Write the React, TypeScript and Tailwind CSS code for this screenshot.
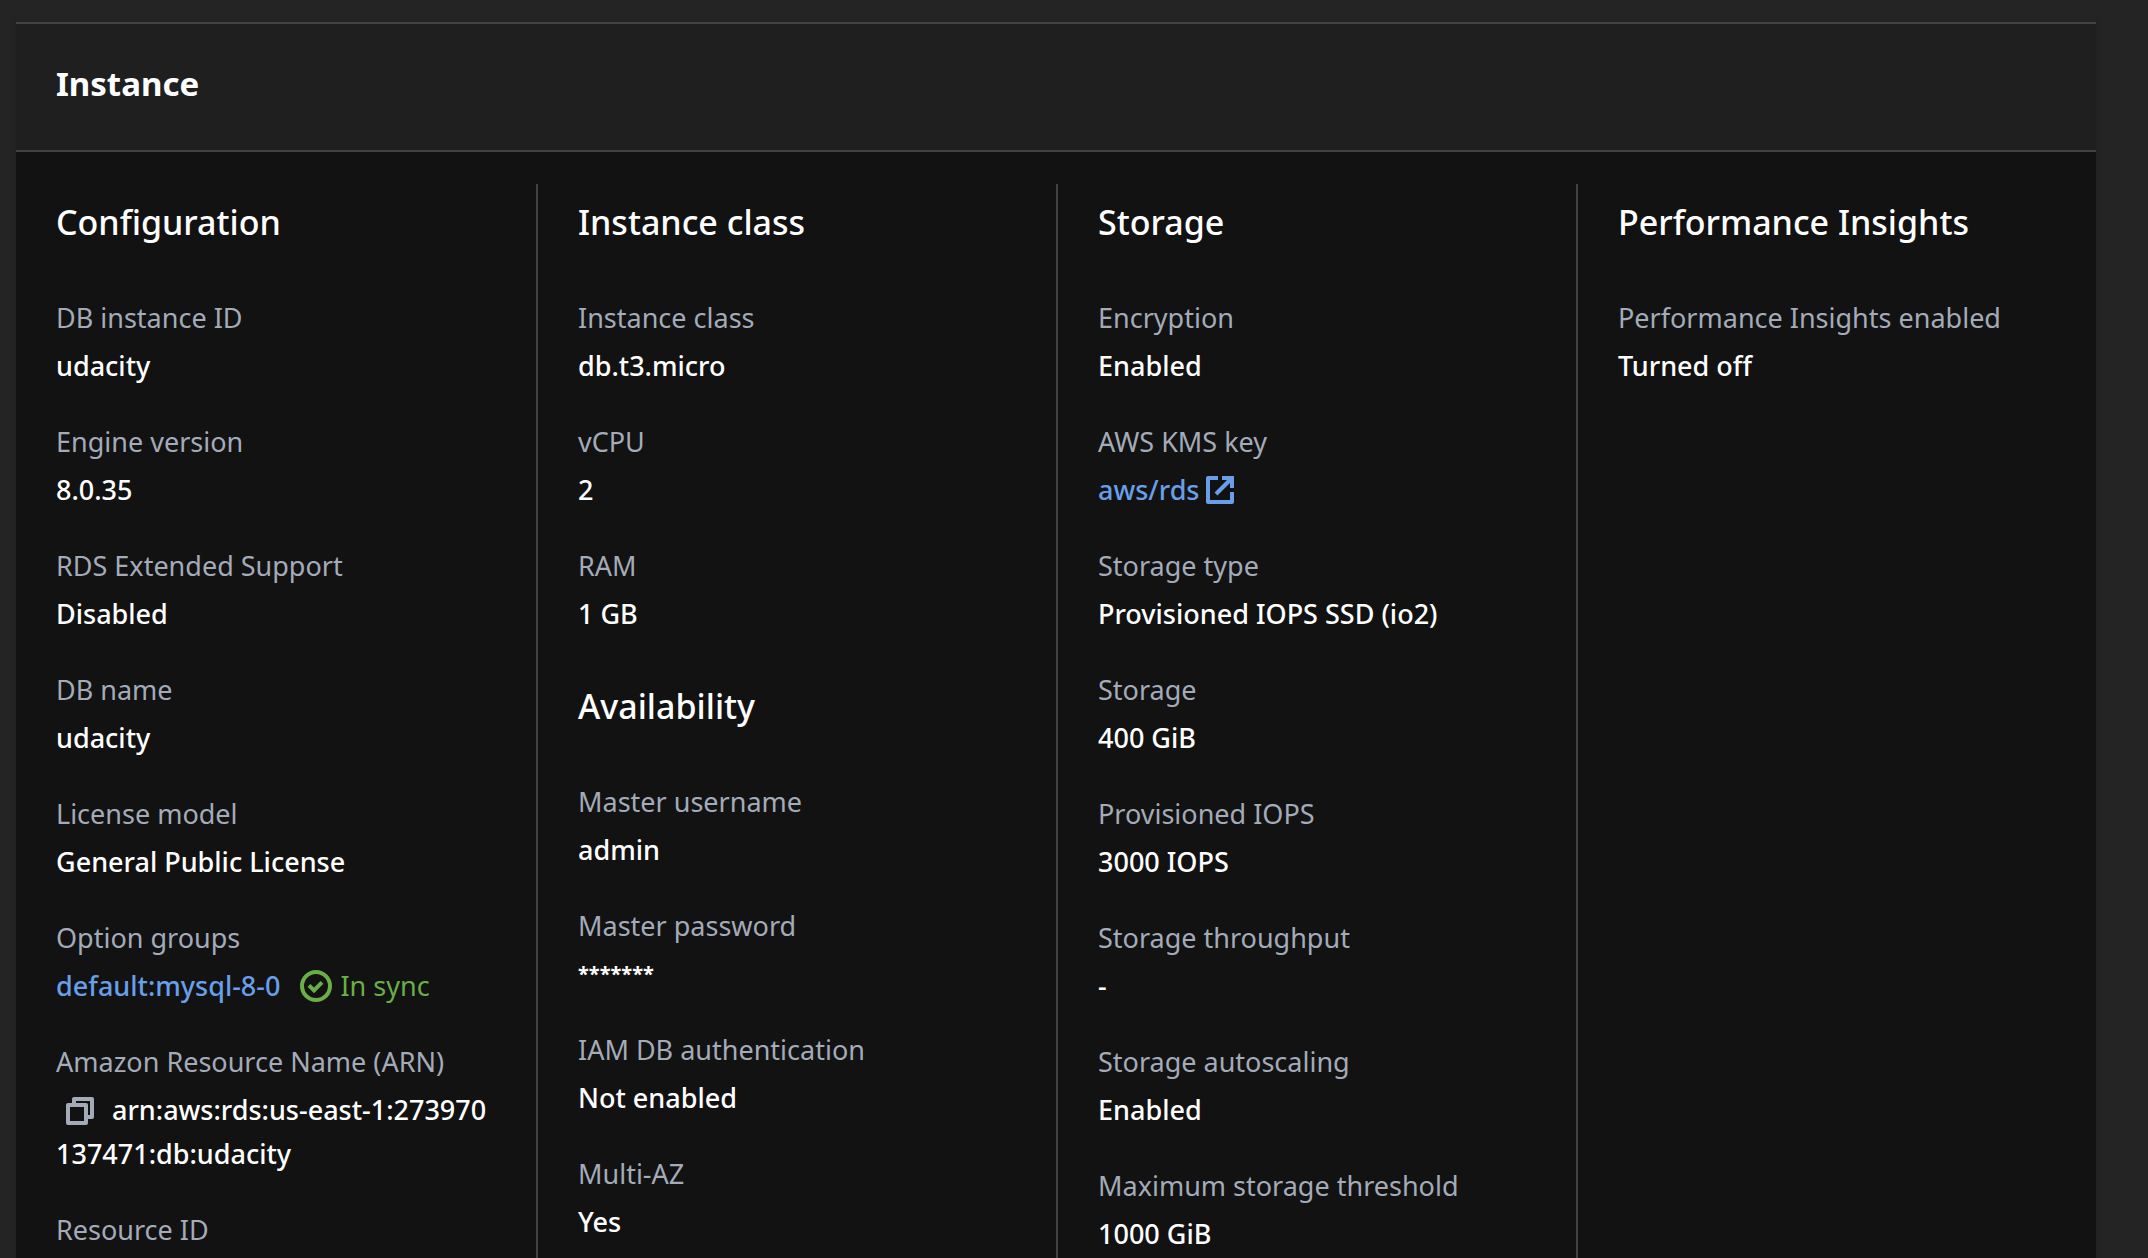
import type { ReactNode } from "react";

type Item = { label: string; value: ReactNode };
type Group = { title: string; items: Item[] };

const stroke = {
  fill: "none",
  stroke: "currentColor",
  strokeWidth: 2,
  strokeLinejoin: "round" as const,
};

function ExternalIcon() {
  return (
    <svg viewBox="0 0 16 16" className="size-8 shrink-0" aria-hidden="true" {...stroke}>
      <path d="M7 2H2v12h12V9" />
      <path d="M9 2h5v5" strokeLinejoin="miter" />
      <path d="m6 10 8-8" />
    </svg>
  );
}

function CheckIcon() {
  return (
    <svg viewBox="0 0 16 16" className="size-8 shrink-0" aria-hidden="true" {...stroke}>
      <circle cx="8" cy="8" r="7" />
      <path d="m4.5 7.7 2.5 2.5 4-4" strokeLinejoin="miter" />
    </svg>
  );
}

function CopyIcon() {
  return (
    <svg viewBox="0 0 16 16" className="size-8" aria-hidden="true" {...stroke}>
      <path d="M2 5h9v9H2z" />
      <path d="M5 5V2h9v9h-3" />
    </svg>
  );
}

const columns: Group[][] = [
  [
    {
      title: "Configuration",
      items: [
        { label: "DB instance ID", value: "udacity" },
        { label: "Engine version", value: "8.0.35" },
        { label: "RDS Extended Support", value: "Disabled" },
        { label: "DB name", value: "udacity" },
        { label: "License model", value: "General Public License" },
        {
          label: "Option groups",
          value: (
            <span className="flex items-center gap-5">
              <a href="#option-group" className="text-[#689fe8]">default:mysql-8-0</a>
              <span className="flex items-center gap-2 font-normal text-[#6aaf45]">
                <CheckIcon />
                In sync
              </span>
            </span>
          ),
        },
        {
          label: "Amazon Resource Name (ARN)",
          value: (
            <>
              <button
                type="button"
                aria-label="Copy ARN"
                className="mr-2 mb-1 px-2 align-middle text-[#a4abb8]"
              >
                <CopyIcon />
              </button>
              arn:aws:rds:us-east-1:273970137471:db:udacity
            </>
          ),
        },
        { label: "Resource ID", value: "" },
      ],
    },
  ],
  [
    {
      title: "Instance class",
      items: [
        { label: "Instance class", value: "db.t3.micro" },
        { label: "vCPU", value: "2" },
        { label: "RAM", value: "1 GB" },
      ],
    },
    {
      title: "Availability",
      items: [
        { label: "Master username", value: "admin" },
        {
          label: "Master password",
          value: <span className="block text-xl leading-[44px] font-bold">*******</span>,
        },
        { label: "IAM DB authentication", value: "Not enabled" },
        { label: "Multi-AZ", value: "Yes" },
      ],
    },
  ],
  [
    {
      title: "Storage",
      items: [
        { label: "Encryption", value: "Enabled" },
        {
          label: "AWS KMS key",
          value: (
            <a href="#kms" className="flex items-center gap-1 text-[#689fe8]">
              aws/rds
              <ExternalIcon />
            </a>
          ),
        },
        { label: "Storage type", value: "Provisioned IOPS SSD (io2)" },
        { label: "Storage", value: "400 GiB" },
        { label: "Provisioned IOPS", value: "3000 IOPS" },
        { label: "Storage throughput", value: "-" },
        { label: "Storage autoscaling", value: "Enabled" },
        { label: "Maximum storage threshold", value: "1000 GiB" },
      ],
    },
  ],
  [
    {
      title: "Performance Insights",
      items: [{ label: "Performance Insights enabled", value: "Turned off" }],
    },
  ],
];

export default function App() {
  return (
    <div className="h-screen overflow-hidden bg-[#242424] pt-[22px] pr-[52px] pl-4 font-['Noto_Sans',sans-serif] text-[27px] leading-[44px] font-medium text-white">
      <section className="flex h-full flex-col bg-[#121212] shadow-[0_0_4px_#1d2224]">
        <header className="border-y-2 border-[#434343] bg-[#1f1f1f] px-10 pt-9 pb-[42px]">
          <h2 className="text-[33px] leading-[48px] font-bold">Instance</h2>
        </header>
        <div className="grid grow grid-cols-4 pt-8">
          {columns.map((groups, i) => (
            <div
              key={i}
              className={
                i === 0
                  ? "flex flex-col gap-8 px-10"
                  : "flex flex-col gap-8 border-l-2 border-[#434343] px-10"
              }
            >
              {groups.map((group) => (
                <section key={group.title}>
                  <h3 className="pt-3.5 pb-[34px] text-[34px] leading-[48px] font-medium">{group.title}</h3>
                  <dl className="flex flex-col gap-8 pt-4">
                    {group.items.map((item) => (
                      <div key={item.label} className="flex flex-col gap-1">
                        <dt className="font-normal text-[#a4abb8]">{item.label}</dt>
                        <dd className="break-all">{item.value}</dd>
                      </div>
                    ))}
                  </dl>
                </section>
              ))}
            </div>
          ))}
        </div>
      </section>
    </div>
  );
}
